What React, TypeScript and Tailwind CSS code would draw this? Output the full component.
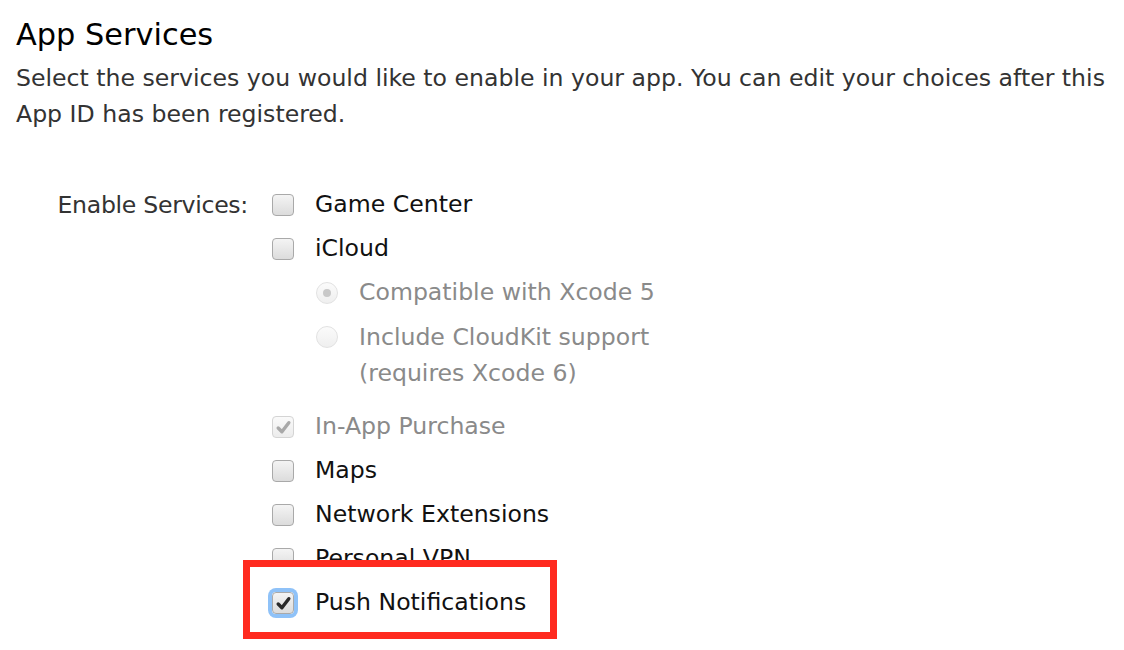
import React from 'react'

const font = { fontFamily: '"DejaVu Sans", Verdana, sans-serif' }

function Box({ checked, disabled, focus }: { checked?: boolean; disabled?: boolean; focus?: boolean }) {
  return (
    <span
      className={
        'flex h-[22px] w-[22px] shrink-0 items-center justify-center rounded-[4px] border bg-gradient-to-b ' +
        (disabled
          ? 'border-[#d4d4d4] from-[#fafafa] to-[#ececec]'
          : 'border-[#a9a9a9] from-[#f4f4f4] to-[#dcdcdc]') +
        (focus ? ' ring-[4px] ring-[#8fc2f8]' : '')
      }
    >
      {checked && (
        <svg viewBox="0 0 16 16" className="h-[17px] w-[17px]">
          <path
            d="M3 8.5 L6.5 12 L13 3.5"
            fill="none"
            stroke={disabled ? '#a8a8a8' : '#2a2a2a'}
            strokeWidth="3.2"
            strokeLinecap="round"
            strokeLinejoin="round"
          />
        </svg>
      )}
    </span>
  )
}

function Radio({ checked }: { checked?: boolean }) {
  return (
    <span className="flex h-[22px] w-[22px] shrink-0 items-center justify-center rounded-full border border-[#e2e2e2] bg-gradient-to-b from-[#fbfbfb] to-[#efefef]">
      {checked && <span className="h-[8px] w-[8px] rounded-full bg-[#c8c8c8]" />}
    </span>
  )
}

function Row({ children, label, dim }: { children: React.ReactNode; label: string; dim?: boolean }) {
  return (
    <div className="flex h-[44px] items-center gap-[21px]">
      {children}
      <span className={dim ? 'text-[#8a8a8a]' : 'text-[#111]'}>{label}</span>
    </div>
  )
}

export default function App() {
  return (
    <div className="h-[650px] w-[1124px] overflow-hidden bg-white text-[23.6px]" style={font}>
      <div className="px-[16px] pt-[14px]">
        <h1 className="text-[30.4px] leading-[42px] text-black">App Services</h1>
        <p className="mt-[4px] leading-[36px] text-[#333]">
          Select the services you would like to enable in your app. You can edit your choices after this App ID has been registered.
        </p>
      </div>

      <div className="mt-[51px] flex">
        <div className="w-[250px] pr-[2px] text-right leading-[44px] tracking-[-0.3px] text-[#333]">Enable Services:</div>
        <div className="flex flex-col pl-[22px]">
          <Row label="Game Center"><Box /></Row>
          <Row label="iCloud"><Box /></Row>
          <div className="flex flex-col pl-[44px]">
            <Row label="Compatible with Xcode 5" dim><Radio checked /></Row>
            <div className="flex items-start gap-[21px] pt-[11px]">
              <Radio />
              <span className="-mt-[7px] leading-[36px] text-[#8a8a8a]">
                Include CloudKit support
                <br />
                (requires Xcode 6)
              </span>
            </div>
          </div>
          <div className="h-[14px]" />
          <Row label="In-App Purchase" dim><Box checked disabled /></Row>
          <Row label="Maps"><Box /></Row>
          <Row label="Network Extensions"><Box /></Row>
          <Row label="Personal VPN"><Box /></Row>
          <div className="relative">
            <div className="absolute -left-[29px] -top-[21px] h-[79px] w-[314px] border-[7px] border-[#ff2a1f] bg-white" />
            <div className="relative">
              <Row label="Push Notifications"><Box checked focus /></Row>
            </div>
          </div>
        </div>
      </div>
    </div>
  )
}
